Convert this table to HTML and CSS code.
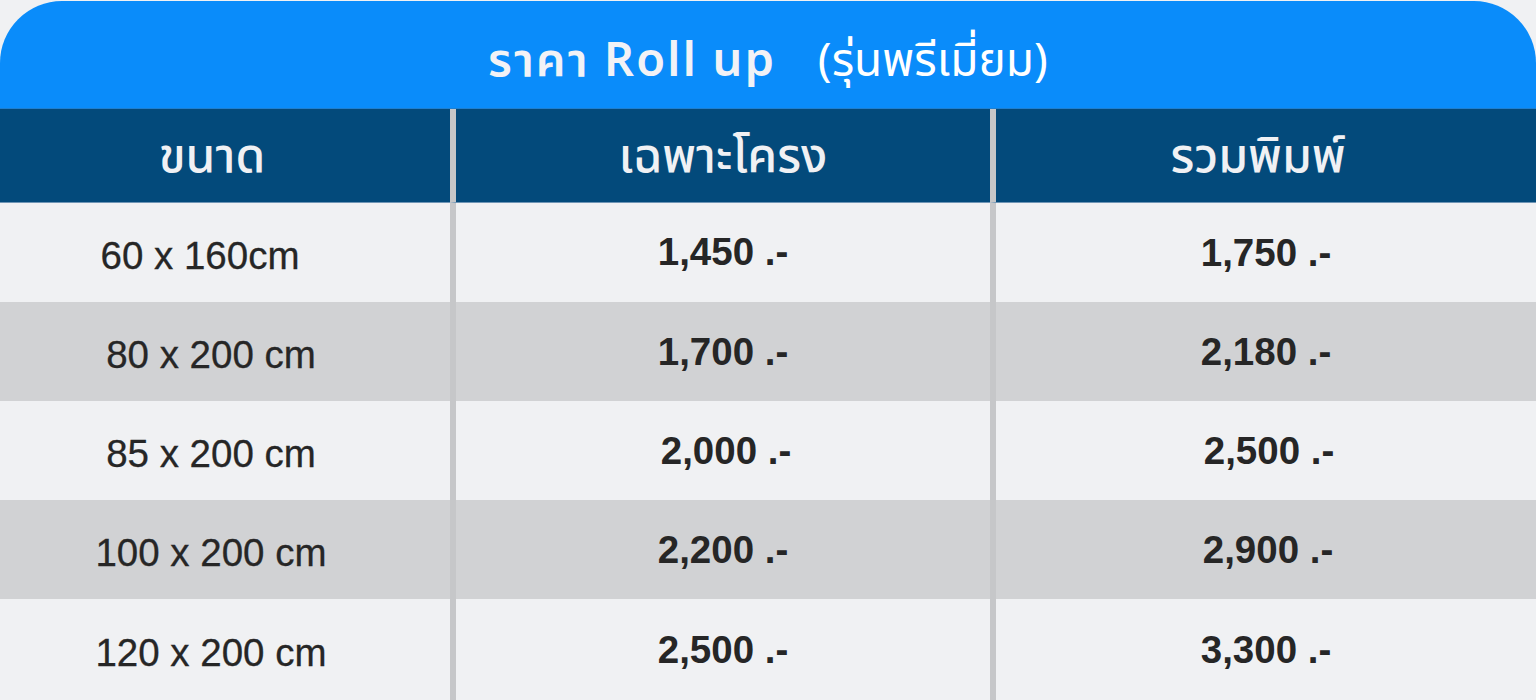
FILE: index.html
```html
<!DOCTYPE html>
<html lang="th">
<head>
<meta charset="utf-8">
<title>ราคา Roll up</title>
<link rel="stylesheet" href="styles.css">
</head>
<body>
<div class="card">
  <div class="title-bar">
    <div class="title-box">
      <span class="title-main">ราคา Roll up</span>
      <span class="title-sub">(รุ่นพรีเมี่ยม)</span>
    </div>
  </div>
  <div class="table">
    <div class="cell head c1">ขนาด</div>
    <div class="cell head c2">เฉพาะโครง</div>
    <div class="cell head c3">รวมพิมพ์</div>

    <div class="cell size odd first">60 x 160cm</div>
    <div class="cell price odd c2 p-up">1,450 .-</div>
    <div class="cell price odd c3">1,750 .-</div>

    <div class="cell size even">80 x 200 cm</div>
    <div class="cell price even c2">1,700 .-</div>
    <div class="cell price even c3">2,180 .-</div>

    <div class="cell size odd">85 x 200 cm</div>
    <div class="cell price odd c2 p-right">2,000 .-</div>
    <div class="cell price odd c3 p-right">2,500 .-</div>

    <div class="cell size even">100 x 200 cm</div>
    <div class="cell price even c2">2,200 .-</div>
    <div class="cell price even c3 p-right-s">2,900 .-</div>

    <div class="cell size odd last">120 x 200 cm</div>
    <div class="cell price odd c2 last">2,500 .-</div>
    <div class="cell price odd c3 last">3,300 .-</div>
  </div>
</div>
</body>
</html>
```

FILE: styles.css
```css
html, body {
  margin: 0;
  padding: 0;
}
body {
  background: #f0f1f3;
  width: 1536px;
  height: 700px;
  overflow: hidden;
}
.card {
  padding-top: 1px;
}
.title-bar {
  height: 107px;
  background: #0a8cfa;
  border-radius: 62px 62px 0 0;
  display: flex;
  justify-content: center;
  align-items: center;
  border-bottom: 1px solid #1f7fd0;
}
.title-box {
  display: flex;
  align-items: center;
  gap: 42px;
  color: #f2f2f6;
  padding: 14px 14px 0;
}
.title-main {
  font-family: "Noto Sans Thai", "Noto Sans", "Liberation Sans", sans-serif;
  font-size: 47px;
  font-weight: 600;
  letter-spacing: 2px;
}
.title-sub {
  font-family: "Noto Sans Thai", "Noto Sans", "Liberation Sans", sans-serif;
  font-size: 46px;
  font-weight: 400;
  color: #ffffff;
}
.table {
  display: grid;
  grid-template-columns: 450px 540px 1fr;
  grid-template-rows: 94px repeat(4, 99px) 1fr;
  height: 592px;
}
.cell {
  display: flex;
  align-items: center;
  justify-content: center;
}
.c2, .c3 {
  border-left: 6px solid #c6c7c9;
}
.head {
  background: #034a7b;
  color: #f0f1f4;
  font-family: "Noto Sans Thai", "Noto Sans", "Liberation Sans", sans-serif;
  font-size: 48px;
  font-weight: 500;
  border-bottom: 1px solid #6f95b5;
  padding-top: 4px;
}
.head.c1 {
  padding-right: 26px;
}
.head.c3 {
  padding-right: 16px;
}
.odd {
  background: #f0f1f3;
}
.even {
  background: #d1d2d4;
}
.size {
  font-family: "Liberation Sans", Arial, sans-serif;
  font-size: 38.5px;
  color: #262626;
  padding-right: 28px;
  padding-top: 6px;
  -webkit-text-stroke: 0.3px #262626;
}
.size.first {
  padding-right: 50px;
}
.price {
  font-family: "Liberation Sans", Arial, sans-serif;
  font-size: 38.5px;
  font-weight: 700;
  color: #262626;
}
.p-up {
  padding-bottom: 2px;
}
.p-right {
  padding-left: 6px;
}
.p-right-s {
  padding-left: 4px;
}
```
